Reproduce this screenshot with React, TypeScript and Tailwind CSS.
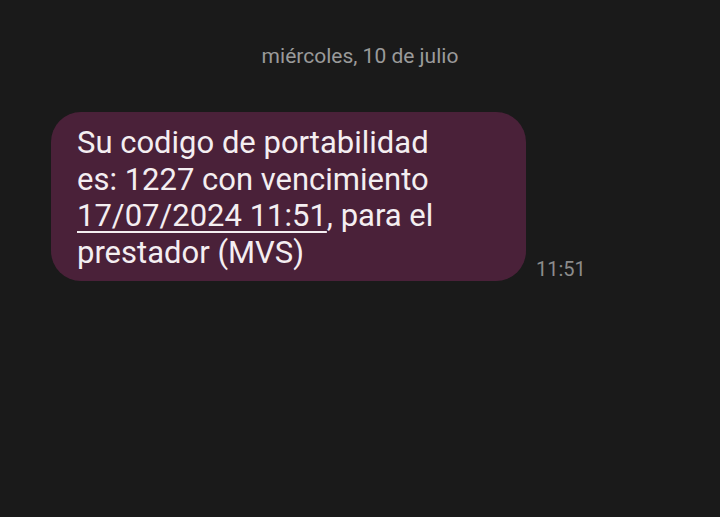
export default function App() {
  return (
    <div className="w-[720px] h-[517px] bg-[#1a1a1a] overflow-hidden font-['Roboto',sans-serif]">
      <div className="pt-[43px] text-center text-[21px] leading-[26px] text-[#9a9a9a]">
        miércoles, 10 de julio
      </div>

      <div className="mt-[43px] flex items-end pl-[51px]">
        <div className="w-[475px] rounded-[30px] bg-[#4a2139] pl-[26px] pr-[16px] pt-[13px] pb-[10px] text-[31px] leading-[36.5px] text-[#f4eef1]">
          Su codigo de portabilidad
          <br />
          es: 1227 con vencimiento
          <br />
          <span className="underline decoration-[1.5px] underline-offset-[5px]">17/07/2024 11:51</span>, para el
          <br />
          prestador (MVS)
        </div>
        <div className="ml-[10px] mb-[0px] text-[20px] leading-[24px] text-[#8c8c8c]">11:51</div>
      </div>
    </div>
  );
}
